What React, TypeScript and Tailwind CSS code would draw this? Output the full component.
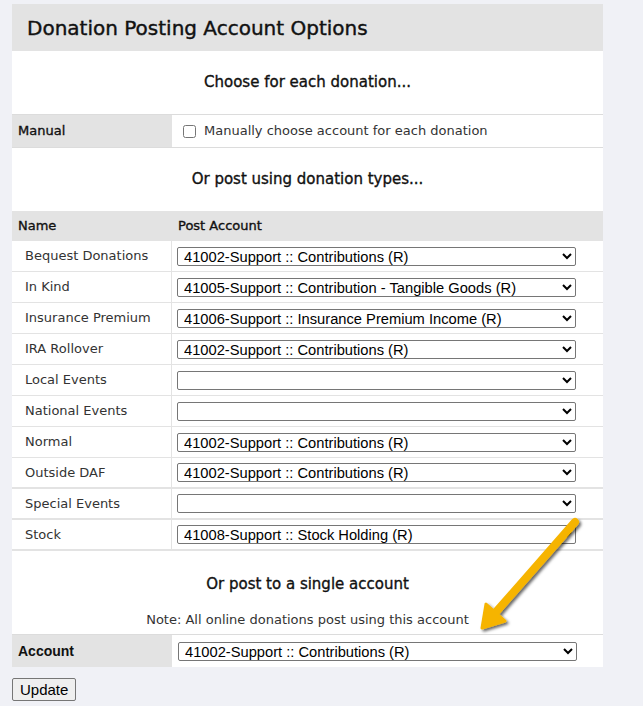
import React from "react"

type Row = { name: string; account: string; thick?: boolean }

const rows: Row[] = [
  { name: "Bequest Donations", account: "41002-Support :: Contributions (R)" },
  { name: "In Kind", account: "41005-Support :: Contribution - Tangible Goods (R)" },
  { name: "Insurance Premium", account: "41006-Support :: Insurance Premium Income (R)" },
  { name: "IRA Rollover", account: "41002-Support :: Contributions (R)" },
  { name: "Local Events", account: "" },
  { name: "National Events", account: "" },
  { name: "Normal", account: "41002-Support :: Contributions (R)" },
  { name: "Outside DAF", account: "41002-Support :: Contributions (R)", thick: true },
  { name: "Special Events", account: "", thick: true },
  { name: "Stock", account: "41008-Support :: Stock Holding (R)", thick: true },
]

function AccountSelect({ value }: { value: string }) {
  return (
    <select
      defaultValue={value}
      className="h-[19px] w-[399px] rounded-[2px] border border-[#767676] bg-white py-0 pl-[2px] text-[14.7px] leading-none text-black font-[family-name:'Liberation_Sans',Arial,sans-serif]"
    >
      <option value={value}>{value}</option>
    </select>
  )
}

export default function App() {
  return (
    <div className="relative min-h-screen bg-[#f0f1f6] px-[12px] pt-[4px] font-[family-name:'DejaVu_Sans','Noto_Sans',sans-serif]">
      <div className="w-[591px] bg-white">
        <div className="flex h-[47px] items-center bg-[#e3e3e3] px-[15px]">
          <h1 className="text-[20px] text-[#111] [-webkit-text-stroke:0.4px]">Donation Posting Account Options</h1>
        </div>

        <div className="flex h-[63px] items-center justify-center">
          <h2 className="text-[15px] text-[#111] [-webkit-text-stroke:0.35px]">Choose for each donation...</h2>
        </div>

        <div className="flex h-[34px] border-y border-[#dcdcdc]">
          <div className="flex w-[160px] items-center bg-[#e3e3e3] px-[6px] text-[13px] text-[#111] [-webkit-text-stroke:0.35px]">
            Manual
          </div>
          <label className="flex items-center gap-[8px] pl-[11px] text-[13px] text-[#333]">
            <input type="checkbox" className="m-0 h-[13px] w-[13px]" />
            Manually choose account for each donation
          </label>
        </div>

        <div className="flex h-[63px] items-center justify-center">
          <h2 className="text-[15px] text-[#111] [-webkit-text-stroke:0.35px]">Or post using donation types...</h2>
        </div>

        <div className="flex h-[30px] items-center bg-[#e3e3e3] text-[13px] text-[#111] [-webkit-text-stroke:0.35px]">
          <div className="w-[160px] px-[6px]">Name</div>
          <div className="px-[6px]">Post Account</div>
        </div>

        {rows.map((row) => (
          <div
            key={row.name}
            className={`flex h-[31px] border-[#e3e3e3] ${row.thick ? "border-b-2" : "border-b"}`}
          >
            <div className="flex w-[160px] items-center border-r border-[#e3e3e3] pl-[13px] text-[13px] text-[#333]">
              {row.name}
            </div>
            <div className="flex items-center pl-[5px]">
              <AccountSelect value={row.account} />
            </div>
          </div>
        ))}

        <div className="flex h-[83px] flex-col items-center">
          <h2 className="mt-[22px] text-[15px] text-[#111] [-webkit-text-stroke:0.35px]">Or post to a single account</h2>
          <p className="mt-[14px] text-[13px] text-[#333]">Note: All online donations post using this account</p>
        </div>

        <div className="flex h-[33px] border-t border-[#dcdcdc]">
          <div className="flex w-[160px] items-center bg-[#e3e3e3] px-[6px] text-[14px] font-bold text-[#111] font-[family-name:'Liberation_Sans',Arial,sans-serif]">
            Account
          </div>
          <div className="flex items-center pl-[6px]">
            <AccountSelect value="41002-Support :: Contributions (R)" />
          </div>
        </div>
      </div>

      <button className="mt-[11px] h-[23px] rounded-[2px] border border-[#767676] bg-[#efefef] px-[7px] text-[15px] text-black font-[family-name:'Liberation_Sans',Arial,sans-serif]">
        Update
      </button>

      <svg
        className="pointer-events-none absolute left-[470px] top-[510px]"
        width="125"
        height="135"
        viewBox="0 0 125 135"
      >
        <defs>
          <filter id="shadow" x="-30%" y="-30%" width="160%" height="160%">
            <feDropShadow dx="2" dy="2" stdDeviation="1.5" floodColor="#000" floodOpacity="0.6" />
          </filter>
        </defs>
        <g filter="url(#shadow)" fill="#f6b400" stroke="#f6b400">
          <line x1="105" y1="12" x2="26" y2="102" strokeWidth="8" strokeLinecap="round" />
          <polygon points="12,118 35,111 16,94" strokeWidth="3" strokeLinejoin="round" />
        </g>
      </svg>
    </div>
  )
}
